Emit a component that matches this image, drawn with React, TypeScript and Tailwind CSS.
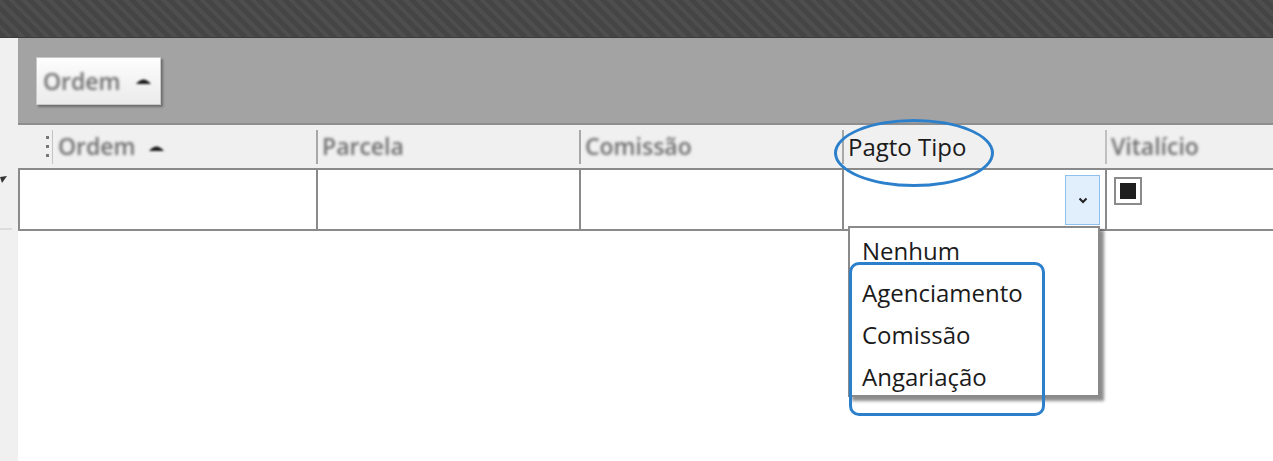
import React from "react";

const blurText = "blur-[1.4px] text-[#6e6e6e] font-semibold";

function Triangle() {
  return (
    <svg width="17" height="8" viewBox="0 0 17 8" className="blur-[0.8px]">
      <path d="M1 7 Q8.5 -2 16 7 Z" fill="#1a1a1a" />
    </svg>
  );
}

export default function App() {
  return (
    <div className="relative w-[1273px] h-[461px] overflow-hidden bg-white font-['Open_Sans',sans-serif] flex flex-col">
      {/* top dark striped bar */}
      <div className="h-[38px] shrink-0 border-b border-[#3c3c3c] bg-[repeating-linear-gradient(45deg,#454545_0px,#454545_5px,#4e4e4e_5px,#4e4e4e_9px)]" />
      <div className="flex flex-1">
        {/* left strip */}
        <div className="w-[18px] shrink-0 bg-[#f0f0f0] flex flex-col">
          <div className="h-[138px]" />
          <div className="h-[8px]">
            <svg width="8" height="8" viewBox="0 0 8 8" className="blur-[0.4px]">
              <path d="M0 1 L7 0 L2 7 Z" fill="#333" />
            </svg>
          </div>
          <div className="h-[44px]" />
          <div className="h-[2px] w-[12px] bg-[#dcdcdc]" />
        </div>
        <div className="flex-1 flex flex-col">
          {/* grey group panel */}
          <div className="h-[87px] bg-[#a3a3a3] border-b-2 border-[#8e8e8e] pl-[18px] pt-[19px]">
            <div className="w-[125px] h-[48px] bg-[linear-gradient(#fdfdfd,#ebebeb)] border border-[#c8c8c8] shadow-[2px_2px_2px_#6f6f6f] flex items-center pl-[6px] gap-[14px]">
              <span className={`text-[23px] ${blurText}`}>Ordem</span>
              <Triangle />
            </div>
          </div>
          {/* header row */}
          <div className="h-[43px] bg-[#f0f0f0] flex items-center text-[23px]">
            <div className="w-[298px] h-full flex items-center pl-[28px]">
              <div className="flex flex-col gap-[6px] blur-[0.4px]">
                <div className="w-[3px] h-[3px] bg-[#777]" />
                <div className="w-[3px] h-[3px] bg-[#777]" />
                <div className="w-[3px] h-[3px] bg-[#777]" />
              </div>
              <div className="w-px h-[34px] bg-[#c4c4c4] ml-[3px]" />
              <span className={`ml-[5px] ${blurText}`}>Ordem</span>
              <span className="ml-[12px] mt-[2px]"><Triangle /></span>
            </div>
            <div className="w-[263px] h-full flex items-center">
              <div className="w-[2px] h-[34px] bg-[#a8a8a8]" />
              <span className={`ml-[4px] ${blurText}`}>Parcela</span>
            </div>
            <div className="w-[263px] h-full flex items-center">
              <div className="w-[2px] h-[34px] bg-[#a8a8a8]" />
              <span className={`ml-[4px] ${blurText}`}>Comissão</span>
            </div>
            <div className="w-[263px] h-full flex items-center">
              <div className="w-[2px] h-[34px] bg-[#a8a8a8]" />
              <span className="ml-[4px] text-[24px] text-[#1b1b1b]">Pagto Tipo</span>
            </div>
            <div className="flex-1 h-full flex items-center">
              <div className="w-[2px] h-[34px] bg-[#c0c0c0]" />
              <span className={`ml-[4px] ${blurText}`}>Vitalício</span>
            </div>
          </div>
          {/* data row */}
          <div className="h-[63px] flex border-y-2 border-l-2 border-[#8a8a8a] bg-white">
            <div className="w-[298px] border-r-2 border-[#8a8a8a]" />
            <div className="w-[263px] border-r-2 border-[#8a8a8a]" />
            <div className="w-[263px] border-r-2 border-[#8a8a8a]" />
            <div className="w-[263px] border-r-2 border-[#8a8a8a] flex justify-end pt-[5px] pr-[5px] pb-[4px]">
              <div className="w-[35px] bg-[#e1eefb] border border-[#8fbfee] flex items-center justify-center">
                <svg width="10" height="7" viewBox="0 0 10 7">
                  <path d="M1.5 1.5 L5 5 L8.5 1.5" fill="none" stroke="#222" strokeWidth="2" />
                </svg>
              </div>
            </div>
            <div className="flex-1 pl-[7px] pt-[7px]">
              <div className="w-[28px] h-[28px] border-2 border-[#8a8a8a] bg-white flex items-center justify-center">
                <div className="w-[16px] h-[16px] bg-[#1f1f1f]" />
              </div>
            </div>
          </div>
        </div>
      </div>

      {/* dropdown list */}
      <div className="absolute left-[848px] top-[226px] w-[252px] h-[171px] bg-white border-2 border-[#8a8a8a] shadow-[4px_4px_3px_rgba(0,0,0,0.45)] flex flex-col pt-[2px] pl-[12px] text-[24px] text-[#1b1b1b] leading-[42px]">
        <span>Nenhum</span>
        <span>Agenciamento</span>
        <span>Comissão</span>
        <span>Angariação</span>
      </div>

      {/* annotations */}
      <div className="absolute left-[834px] top-[119px] w-[160px] h-[68px] rounded-[50%] border-[3px] border-[#2b7fcb]" />
      <div className="absolute left-[849px] top-[262px] w-[196px] h-[154px] rounded-[10px] border-[3px] border-[#2b7fcb]" />
    </div>
  );
}
